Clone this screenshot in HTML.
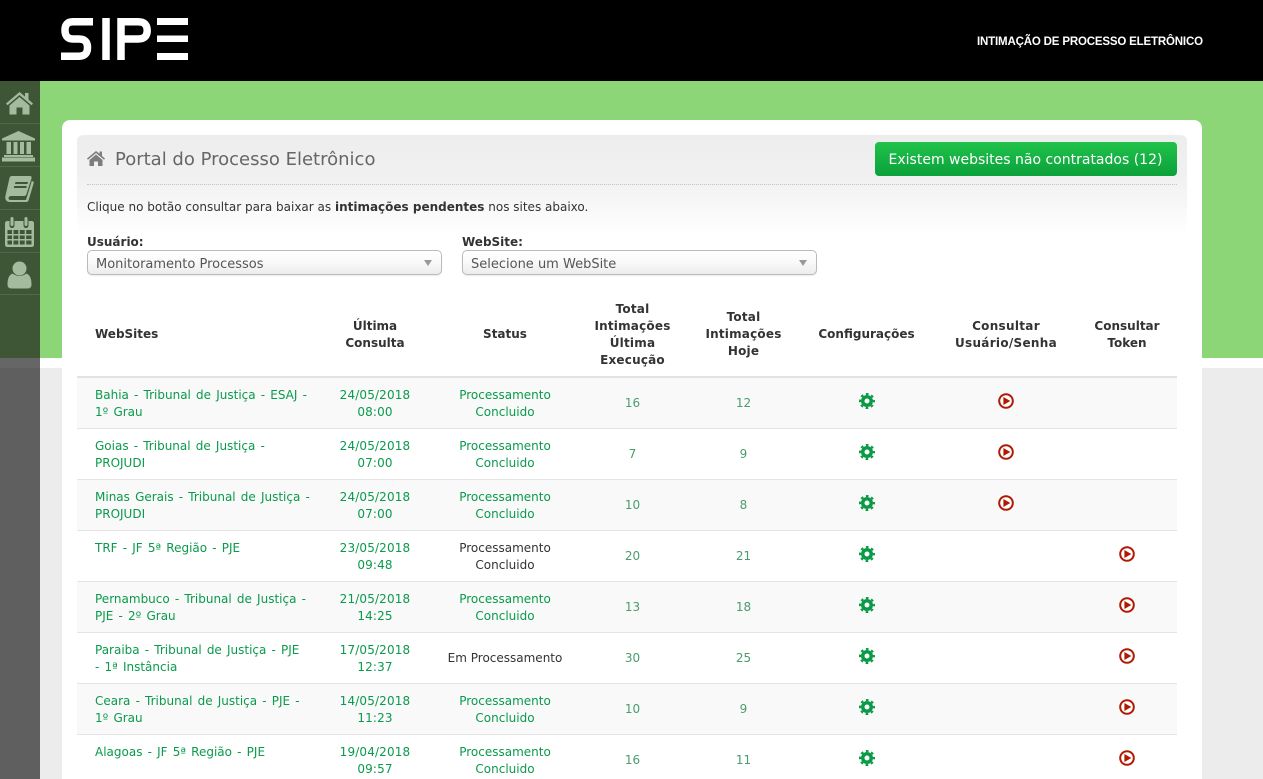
<!DOCTYPE html>
<html lang="pt-BR">
<head>
<meta charset="utf-8">
<title>Portal do Processo Eletrônico</title>
<style>
*{box-sizing:border-box}
html,body{margin:0;padding:0;width:1263px;height:779px;overflow:hidden;background:#ececec;font-family:"DejaVu Sans",Verdana,sans-serif;font-size:12px;color:#333}
#wrap{position:relative;width:1263px;height:779px;overflow:hidden;background:#ececec}
.abs{position:absolute}
#top{left:0;top:0;width:1263px;height:81px;background:#000}
#green{left:0;top:81px;width:1263px;height:277px;background:#8cd678}
#whiteband{left:0;top:358px;width:1263px;height:10px;background:#fff}
#side{left:0;top:81px;width:40px;height:277px;background:#3f5636}
#side2{left:0;top:358px;width:40px;height:421px;background:#5f5f5f}
#side3{left:0;top:358px;width:40px;height:10px;background:#666}
.div{left:0;width:40px;height:1px;background:#52684a}
#tag{left:977px;top:36px;font:bold 11.5px "Liberation Sans",Arial,sans-serif;color:#fff;white-space:nowrap;letter-spacing:-.17px}
#card{left:62px;top:120px;width:1140px;height:659px;background:#fff;border-radius:8px 8px 0 0}
#panel{left:77px;top:135px;width:1110px;height:100px;border-radius:6px 6px 0 0;background:linear-gradient(#ededed 0,#f1f1f1 45%,#fff 100%)}
#dots{left:87px;top:184px;width:1090px;border-top:1px dotted #c4c4c4}
#title{left:115px;top:149px;font-size:18px;line-height:22px;color:#666;white-space:nowrap}
#btn{left:875px;top:142px;width:302px;height:34px;border-radius:4px;background:linear-gradient(#20c24a,#0ba13b);color:#fff;font-size:14px;line-height:36px;text-align:center;white-space:nowrap;padding-right:1px}
#intro{left:87px;top:199px;line-height:17px;white-space:nowrap}
.lbl{top:234px;font-weight:bold;line-height:17px}
.sel{top:250px;width:355px;height:25px;border:1px solid #bbb;border-radius:5px;background:linear-gradient(#fff 0,#fafafa 45%,#ececec 100%);box-shadow:0 1px 1px rgba(0,0,0,.08);line-height:25px;padding:1px 0 0 8px;color:#555;white-space:nowrap;font-size:13px}
.sel i{position:absolute;right:9px;top:9px;width:0;height:0;border-left:4px solid transparent;border-right:4px solid transparent;border-top:6px solid #999}
table{position:absolute;left:77px;top:292px;width:1100px;border-collapse:separate;border-spacing:0;table-layout:fixed;line-height:17px}
th{padding:8px 4px;height:84px;vertical-align:middle;text-align:center;border-bottom:2px solid #e2e2e2;color:#333;font-weight:bold}
th.d{padding:9px 4px 7px}
th:first-child{text-align:left;padding-left:18px}
th:nth-child(4),th:nth-child(5){letter-spacing:.2px}
th:nth-child(7){letter-spacing:.3px}
td{padding:9px 4px 7px;height:51px;text-align:center;vertical-align:middle;border-bottom:1px solid #e4e4e4;color:#0a9a4c;white-space:nowrap}
td:first-child{text-align:left;vertical-align:top;padding-left:18px;padding-right:0;word-spacing:1.35px}
td:nth-child(2){letter-spacing:.15px}
tr:nth-child(odd) td{background:#f9f9f9}
td.n{color:#4b9c6f;padding:8px 4px}
td.k{color:#333}
td.m{padding:8px 4px}
td svg{display:block;margin:0 auto;position:relative;top:-3px}
</style>
</head>
<body>
<div id="wrap">
<svg width="0" height="0" style="position:absolute">
<symbol id="gear" viewBox="0 0 16 16">
<circle cx="8" cy="8" r="4.25" fill="none" stroke="#0a9a46" stroke-width="3.5"/>
<circle cx="8" cy="8" r="7" fill="none" stroke="#0a9a46" stroke-width="2" stroke-dasharray="2.7 2.8" stroke-dashoffset="1.35"/>
</symbol>
<symbol id="play" viewBox="0 0 16 16">
<circle cx="8" cy="8" r="6.8" fill="#fff" stroke="#ae1a04" stroke-width="2"/>
<path d="M5.400 4 L12.300 8 L5.400 12Z" fill="#ae1a04"/>
</symbol>
</svg>

<div class="abs" id="top"></div>
<svg class="abs" style="left:0;top:0" width="200" height="81" viewBox="0 0 200 81" role="img" aria-label="SIPE">
<title>SIPE</title>
<g fill="none" stroke="#fff" stroke-width="7.5">
<path d="M93 21.8 H73 Q65 21.8 65 30 Q65 39 73 39 H79 Q87.5 39 87.5 47.5 Q87.5 56.2 79 56.2 H61"/>
<path d="M106 18 V60"/>
<path d="M121 60 V21.8 H138 Q147.2 21.8 147.2 30.5 Q147.2 39 138 39 H121"/>
</g>
<g fill="#fff"><rect x="157" y="18" width="31" height="7"/><rect x="157" y="35.500" width="31" height="6.500"/><rect x="157" y="53" width="31" height="7"/></g>
</svg>
<div class="abs" id="tag">INTIMAÇÃO DE PROCESSO ELETRÔNICO</div>

<div class="abs" id="green"></div>
<div class="abs" id="whiteband"></div>
<div class="abs" id="side"></div>
<div class="abs" id="side2"></div>
<div class="abs" id="side3"></div>
<div class="abs div" style="top:123px"></div>
<div class="abs div" style="top:166px"></div>
<div class="abs div" style="top:209px"></div>
<div class="abs div" style="top:252px"></div>
<div class="abs div" style="top:294px"></div>

<svg class="abs" style="left:0;top:84px" width="40" height="210" viewBox="0 0 40 210">
<g fill="#a4bb9d">
<!-- home -->
<path d="M19.500 8 L6 19.500 L7.500 21.300 L19.500 11 L31.500 21.300 L33 19.500 L28.500 15.600 V9 H25 V12.600Z"/>
<path d="M19.500 13 L9.500 21.500 V30.500 H16.500 V23.500 H22.500 V30.500 H29.500 V21.500Z"/>
<!-- bank -->
<path d="M18.500 47 L2 54.500 V56.500 H35 V54.500Z"/>
<rect x="6.500" y="58" width="4.500" height="12"/><rect x="13.500" y="58" width="4" height="12"/><rect x="20" y="58" width="4" height="12"/><rect x="26.500" y="58" width="4.500" height="12"/>
<rect x="4" y="71" width="29" height="2"/>
<rect x="2" y="73.500" width="33" height="4"/>
<!-- book -->
<path fill-rule="evenodd" d="M12 92 H30 Q32 92 31.500 94.500 L26.500 110 Q26 112 24 112 H11.500 Q8.500 112 8.500 114.500 Q8.500 116 11 116 H26 L31.800 97 L34 98 L28.500 116.500 Q28 118 26 118 H10 Q5 118 5.300 112.500 L9.500 94 Q10 92 12 92Z M15.500 98 H28 L27.500 100 H15Z M14.300 102 H26.800 L26.300 104 H13.800Z"/>
<!-- calendar -->
<g transform="translate(-.5,-4)">
<path fill-rule="evenodd" d="M8 141 H10 V145 Q10 148 12.500 148 Q15 148 15 145 V141 H24 V145 Q24 148 26.500 148 Q29 148 29 145 V141 H32 Q34.500 141 34.500 143.500 V164.500 Q34.500 167 32 167 H8 Q5.500 167 5.500 164.500 V143.500 Q5.500 141 8 141Z M8 150 V154 H12.500 V150Z M14 150 V154 H18.800 V150Z M20.300 150 V154 H25.200 V150Z M26.700 150 V154 H32 V150Z M8 155.500 V159 H12.500 V155.500Z M14 155.500 V159 H18.800 V155.500Z M20.300 155.500 V159 H25.200 V155.500Z M26.700 155.500 V159 H32 V155.500Z M8 160.500 V164.500 H12.500 V160.500Z M14 160.500 V164.500 H18.800 V160.500Z M20.300 160.500 V164.500 H25.200 V160.500Z M26.700 160.500 V164.500 H32 V160.500Z"/>
<rect x="11" y="137" width="3" height="9" rx="1.500"/><rect x="25" y="137" width="3" height="9" rx="1.500"/>
</g>
<!-- user -->
<g transform="translate(-.5,-3.500)">
<circle cx="20" cy="188" r="7"/>
<path d="M13 193 Q20 198 27 193 Q32 195 32 204 Q32 208 28 208 H12 Q8 208 8 204 Q8 195 13 193Z"/>
</g>
</g>
</svg>

<div class="abs" id="card"></div>
<div class="abs" id="panel"></div>
<div class="abs" id="dots"></div>
<svg class="abs" style="left:87px;top:150px" width="18" height="17" viewBox="0 0 18 17">
<path fill="#7d7d7d" d="M9 1 L0 8.500 L1 9.800 L9 3 L17 9.800 L18 8.500 L15 6 V1.500 H12.500 V3.800Z"/>
<path fill="#7d7d7d" d="M9 4.500 L2.500 10 V16 H7 V11.500 H11 V16 H15.500 V10Z"/>
</svg>
<div class="abs" id="title">Portal do Processo Eletrônico</div>
<div class="abs" id="btn">Existem websites não contratados (12)</div>
<div class="abs" id="intro">Clique no botão consultar para baixar as <b>intimações pendentes</b> nos sites abaixo.</div>

<div class="abs lbl" style="left:87px">Usuário:</div>
<div class="abs lbl" style="left:462px">WebSite:</div>
<div class="abs sel" style="left:87px">Monitoramento Processos<i></i></div>
<div class="abs sel" style="left:462px">Selecione um WebSite<i></i></div>

<table>
<colgroup><col style="width:239px"><col style="width:118px"><col style="width:142px"><col style="width:113px"><col style="width:109px"><col style="width:137px"><col style="width:142px"><col style="width:100px"></colgroup>
<thead>
<tr><th>WebSites</th><th class="d">Última<br>Consulta</th><th>Status</th><th class="d">Total<br>Intimações<br>Última<br>Execução</th><th>Total<br>Intimações<br>Hoje</th><th>Configurações</th><th class="d">Consultar<br>Usuário/Senha</th><th class="d">Consultar<br>Token</th></tr>
</thead>
<tbody>
<tr><td>Bahia - Tribunal de Justiça - ESAJ -<br>1º Grau</td><td>24/05/2018<br>08:00</td><td>Processamento<br>Concluido</td><td class="n">16</td><td class="n">12</td><td><svg width="16" height="16"><use href="#gear"/></svg></td><td><svg width="16" height="16"><use href="#play"/></svg></td><td></td></tr>
<tr><td>Goias - Tribunal de Justiça -<br>PROJUDI</td><td>24/05/2018<br>07:00</td><td>Processamento<br>Concluido</td><td class="n">7</td><td class="n">9</td><td><svg width="16" height="16"><use href="#gear"/></svg></td><td><svg width="16" height="16"><use href="#play"/></svg></td><td></td></tr>
<tr><td>Minas Gerais - Tribunal de Justiça -<br>PROJUDI</td><td>24/05/2018<br>07:00</td><td>Processamento<br>Concluido</td><td class="n">10</td><td class="n">8</td><td><svg width="16" height="16"><use href="#gear"/></svg></td><td><svg width="16" height="16"><use href="#play"/></svg></td><td></td></tr>
<tr><td>TRF - JF 5ª Região - PJE</td><td>23/05/2018<br>09:48</td><td class="k">Processamento<br>Concluido</td><td class="n">20</td><td class="n">21</td><td><svg width="16" height="16"><use href="#gear"/></svg></td><td></td><td><svg width="16" height="16"><use href="#play"/></svg></td></tr>
<tr><td>Pernambuco - Tribunal de Justiça -<br>PJE - 2º Grau</td><td>21/05/2018<br>14:25</td><td>Processamento<br>Concluido</td><td class="n">13</td><td class="n">18</td><td><svg width="16" height="16"><use href="#gear"/></svg></td><td></td><td><svg width="16" height="16"><use href="#play"/></svg></td></tr>
<tr><td>Paraiba - Tribunal de Justiça - PJE<br>- 1ª Instância</td><td>17/05/2018<br>12:37</td><td class="k m">Em Processamento</td><td class="n">30</td><td class="n">25</td><td><svg width="16" height="16"><use href="#gear"/></svg></td><td></td><td><svg width="16" height="16"><use href="#play"/></svg></td></tr>
<tr><td>Ceara - Tribunal de Justiça - PJE -<br>1º Grau</td><td>14/05/2018<br>11:23</td><td>Processamento<br>Concluido</td><td class="n">10</td><td class="n">9</td><td><svg width="16" height="16"><use href="#gear"/></svg></td><td></td><td><svg width="16" height="16"><use href="#play"/></svg></td></tr>
<tr><td>Alagoas - JF 5ª Região - PJE</td><td>19/04/2018<br>09:57</td><td>Processamento<br>Concluido</td><td class="n">16</td><td class="n">11</td><td><svg width="16" height="16"><use href="#gear"/></svg></td><td></td><td><svg width="16" height="16"><use href="#play"/></svg></td></tr>
</tbody>
</table>
</div>
</body>
</html>
